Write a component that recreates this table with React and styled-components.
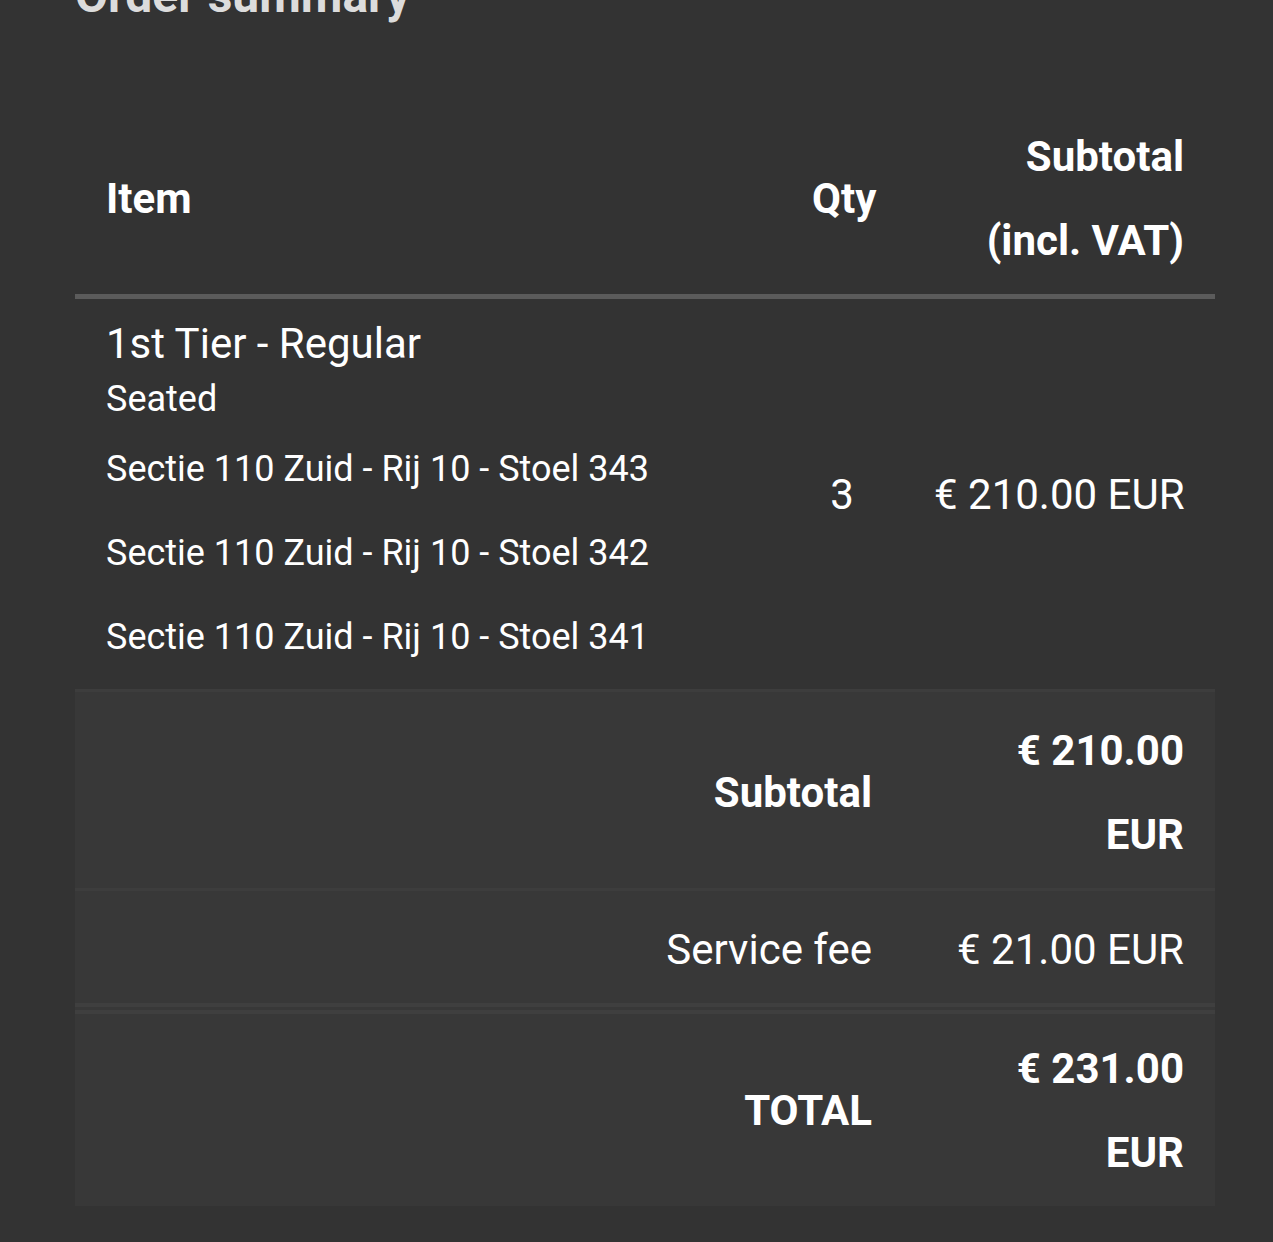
import React from "react";
import styled, { createGlobalStyle } from "styled-components";

const GlobalStyle = createGlobalStyle`
    html, body {
        margin: 0;
        padding: 0;
        background: #333333;
        overflow: hidden;
    }
    body {
        font-family: Roboto, "Liberation Sans", Arial, sans-serif;
        color: #ffffff;
    }
`;

const Page = styled.div`
    padding: 0 58px 0 75px;
    min-height: 1242px;
    background: #333333;
`;

const Title = styled.h2`
    margin: -32px 0 0;
    font-size: 48px;
    line-height: 56px;
    font-weight: 700;
    color: #dcdcdc;
`;

const Table = styled.table`
    margin-top: 80px;
    width: 1140px;
    border-collapse: collapse;
    table-layout: fixed;
`;

const Th = styled.th`
    padding: 11px 31px;
    font-size: 42px;
    line-height: 84px;
    font-weight: 700;
    vertical-align: middle;
    text-align: ${(p) => p.$align || "left"};
    border-bottom: 5px solid #5b5b5b;
`;

const Td = styled.td`
    padding: 11px 31px 10px;
    font-size: 42px;
    line-height: 84px;
    vertical-align: middle;
    text-align: ${(p) => p.$align || "left"};
    white-space: ${(p) => (p.$nowrap ? "nowrap" : "normal")};
`;

const ItemName = styled.div`
    font-size: 42px;
    line-height: 67px;
`;

const ItemKind = styled.div`
    font-size: 36px;
    line-height: 44px;
`;

const Seats = styled.div`
    margin-top: 6px;
`;

const Seat = styled.div`
    font-size: 36px;
    line-height: 84px;
`;

const FootRow = styled.tr`
    background: #383838;
`;

const FootCell = styled.td`
    padding: ${(p) => (p.$total ? "13px 31px 11px" : "17px 31px 11px")};
    font-size: 42px;
    line-height: 84px;
    text-align: right;
    vertical-align: middle;
    font-weight: ${(p) => (p.$bold ? 700 : 400)};
    white-space: ${(p) => (p.$nowrap ? "nowrap" : "normal")};
    border-top: ${(p) => (p.$total ? "11px double #3f3f3f" : "3px solid #3d3d3d")};
`;

const seats = [
    "Sectie 110 Zuid - Rij 10 - Stoel 343",
    "Sectie 110 Zuid - Rij 10 - Stoel 342",
    "Sectie 110 Zuid - Rij 10 - Stoel 341",
];

export default function App() {
    return (
        <>
            <GlobalStyle />
            <Page>
                <Title>Order summary</Title>
                <Table>
                    <colgroup>
                        <col style={{ width: 706 }} />
                        <col style={{ width: 122 }} />
                        <col style={{ width: 312 }} />
                    </colgroup>
                    <thead>
                        <tr>
                            <Th>Item</Th>
                            <Th $align="center">Qty</Th>
                            <Th $align="right">Subtotal (incl. VAT)</Th>
                        </tr>
                    </thead>
                    <tbody>
                        <tr>
                            <Td>
                                <ItemName>1st Tier - Regular</ItemName>
                                <ItemKind>Seated</ItemKind>
                                <Seats>
                                    {seats.map((s) => (
                                        <Seat key={s}>{s}</Seat>
                                    ))}
                                </Seats>
                            </Td>
                            <Td $align="center">3</Td>
                            <Td $align="right" $nowrap>€ 210.00 EUR</Td>
                        </tr>
                    </tbody>
                    <tfoot>
                        <FootRow>
                            <FootCell colSpan={2} $bold>Subtotal</FootCell>
                            <FootCell $bold>€ 210.00 EUR</FootCell>
                        </FootRow>
                        <FootRow>
                            <FootCell colSpan={2}>Service fee</FootCell>
                            <FootCell $nowrap>€ 21.00 EUR</FootCell>
                        </FootRow>
                        <FootRow>
                            <FootCell colSpan={2} $bold $total>TOTAL</FootCell>
                            <FootCell $bold $total>€ 231.00 EUR</FootCell>
                        </FootRow>
                    </tfoot>
                </Table>
            </Page>
        </>
    );
}
